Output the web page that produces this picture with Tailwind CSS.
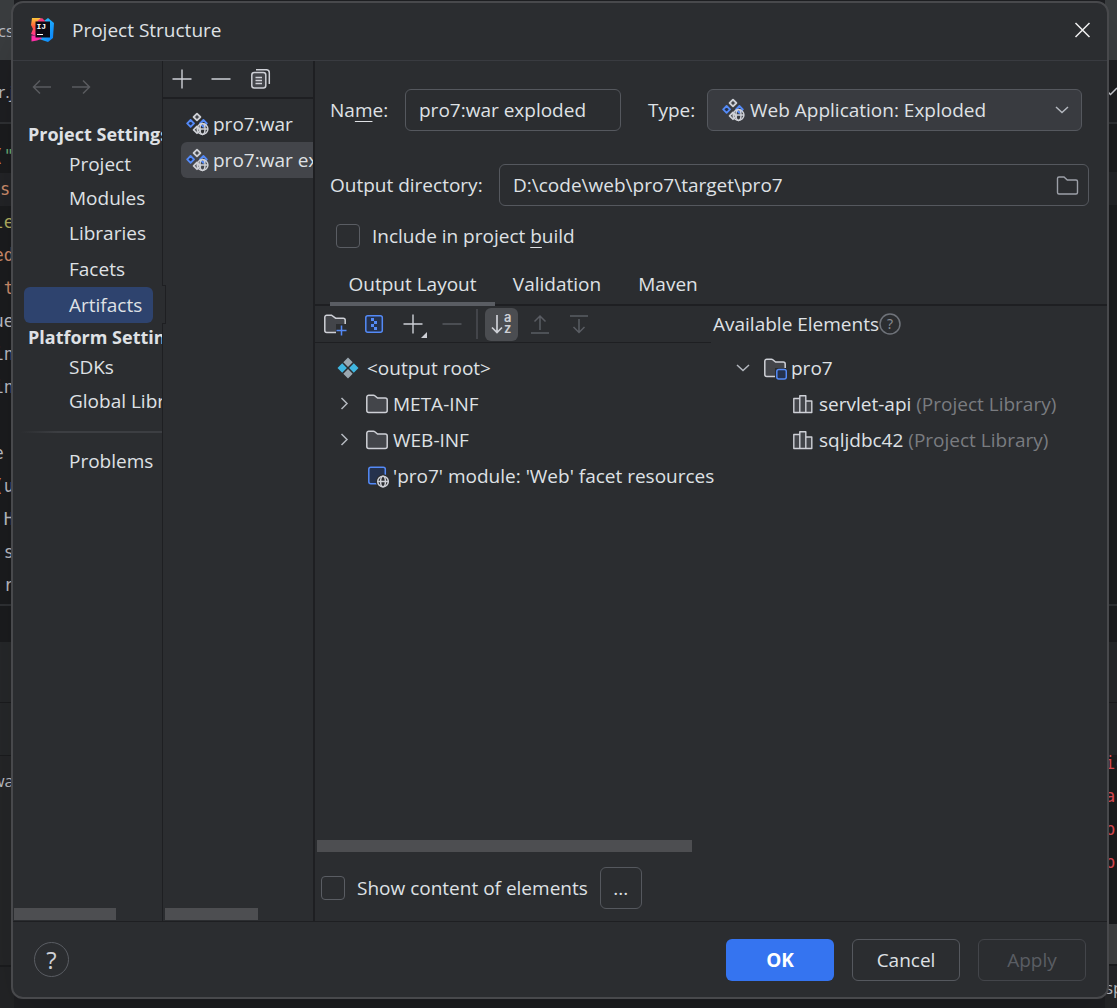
<!DOCTYPE html>
<html lang="en">
<head>
  <meta charset="UTF-8" />
  <meta name="viewport" content="width=device-width, initial-scale=1" />
  <title>Project Structure</title>
  <script src="https://cdn.jsdelivr.net/npm/@tailwindcss/browser@4"></script>
</head>
<body class="bg-[#1e1f22] text-[#dfe1e5] text-[19px] leading-6 font-['Open_Sans','Noto_Sans',sans-serif]">
  <!-- Icon sprite -->
  <svg class="hidden">
    <symbol id="artifact" viewBox="0 0 24 24">
      <mask id="artifact-cut">
        <rect width="24" height="24" fill="#fff" />
        <circle cx="17.5" cy="17" r="7.2" fill="#000" />
      </mask>
      <g mask="url(#artifact-cut)" fill="none" stroke-width="1.8" stroke-linejoin="round">
        <path d="M12 1.6 15.4 5 12 8.4 8.6 5Z" stroke="#ced0d6" fill="#43454a" />
        <path d="M5.6 8 9 11.4 5.6 14.8 2.2 11.4Z" stroke="#548af7" fill="#25324d" />
        <path d="M18.4 8 21.8 11.4 18.4 14.8 15 11.4Z" stroke="#548af7" />
        <path d="M12 14.4 15.4 17.8 12 21.2 8.6 17.8Z" stroke="#ced0d6" />
      </g>
      <g fill="none" stroke="#ced0d6" stroke-width="1.5">
        <circle cx="17.5" cy="17" r="5.4" />
        <ellipse cx="17.5" cy="17" rx="2.5" ry="5.4" />
        <path d="M12 17h11" />
      </g>
    </symbol>
    <symbol id="folder" viewBox="0 0 24 24">
      <path d="M1.8 5.2a2 2 0 0 1 2-2h4.7a2 2 0 0 1 1.3.5l2.8 2.4h7.6a2 2 0 0 1 2 2v10.4a2 2 0 0 1-2 2H3.8a2 2 0 0 1-2-2Z" fill="#43454a" stroke="#ced0d6" stroke-width="1.5" />
    </symbol>
    <symbol id="folder-outline" viewBox="0 0 24 24">
      <path d="M2.5 5.5A1.5 1.5 0 0 1 4 4h5l3.300 3H21a1.500 1.500 0 0 1 1.500 1.500v11A1.500 1.500 0 0 1 21 21H4a1.500 1.500 0 0 1-1.500-1.500Z" fill="none" stroke="#9da0a8" stroke-width="1.4" />
    </symbol>
    <symbol id="library" viewBox="0 0 24 24">
      <path d="M2.8 6.5h6v14h-6ZM8.8 3.8h6v16.7h-6ZM14.8 9h6v11.5h-6Z" fill="#43454a" stroke="#ced0d6" stroke-width="1.4" stroke-linejoin="round" />
    </symbol>
    <symbol id="chevron-right" viewBox="0 0 24 24">
      <path d="m9.5 6 5.5 5.5L9.5 17" fill="none" stroke="#b4b8bf" stroke-width="1.5" />
    </symbol>
    <symbol id="chevron-down" viewBox="0 0 24 24">
      <path d="m6 9 6 5.5L18 9" fill="none" stroke="#b4b8bf" stroke-width="1.5" />
    </symbol>
    <symbol id="plus" viewBox="0 0 24 24">
      <path d="M12 2.5v19M2.5 12h19" fill="none" stroke="currentColor" stroke-width="1.4" />
    </symbol>
    <symbol id="minus" viewBox="0 0 24 24">
      <path d="M2.5 12h19" fill="none" stroke="currentColor" stroke-width="1.4" />
    </symbol>
  </svg>

  <div class="relative min-h-screen overflow-hidden">
    <!-- Editor window behind the dialog -->
    <div class="flex h-screen justify-between text-[#bcbec4] font-['DejaVu_Sans_Mono',monospace] text-[17px] leading-[33px]" aria-hidden="true">
      <div class="flex w-3.5 flex-col overflow-hidden">
        <div class="flex h-[60px] items-center justify-end bg-[#3a3d3f] font-['Open_Sans',sans-serif]">cs</div>
        <div class="flex h-16 items-center justify-end border-b-2 border-[#2f3134] bg-[#1e1f22] font-['Open_Sans',sans-serif]">r.j</div>
        <div class="flex h-[480px] flex-col items-end bg-[#1b1c1e] pt-4">
          <span><span class="text-[#cf8e6d]">(</span><span class="text-[#6aab73]">"</span></span>
          <span class="w-full bg-[#232427] text-[#cf8e6d]">s</span>
          <span class="text-[#b3ae60]">le</span>
          <span class="text-[#cf8e6d]">ed</span>
          <span class="text-[#cf8e6d]">t</span>
          <span>ue</span>
          <span>in</span>
          <span>in</span>
          <span>&nbsp;</span>
          <span>e&nbsp;</span>
          <span><span class="text-[#cf8e6d]">(</span>u</span>
          <span>H</span>
          <span>s</span>
          <span>r</span>
        </div>
        <div class="h-[38px] border-t-2 border-[#2f3134] bg-[#1b1c1e]"></div>
        <div class="h-[60px] bg-[#26282a]"></div>
        <div class="h-[53px] border-t border-[#1b1c1e] bg-[#26282a]"></div>
        <div class="flex h-[210px] items-start justify-end border-t border-[#1b1c1e] bg-[#252628] pt-2 font-['Open_Sans',sans-serif]">wa</div>
        <div class="grow border-t-2 border-[#1b1c1e] bg-[#232426]"></div>
      </div>
      <div class="flex w-3 flex-col overflow-hidden">
        <div class="h-[60px] bg-[#3a3d3f]"></div>
        <div class="flex h-16 items-center border-b-2 border-[#2f3134] bg-[#1e1f22]">
          <svg class="size-3" viewBox="0 0 12 12"><path d="m3 7 2.5 2.5L12 3" fill="none" stroke="#ced0d6" stroke-width="1.5" /></svg>
        </div>
        <div class="h-12 bg-[#1b1c1e]"></div>
        <div class="h-[33px] bg-[#232427]"></div>
        <div class="h-[399px] bg-[#1b1c1e]"></div>
        <div class="h-[38px] border-t-2 border-[#2f3134] bg-[#1b1c1e]"></div>
        <div class="h-[60px] bg-[#26282a]"></div>
        <div class="h-[53px] border-t border-[#1b1c1e] bg-[#26282a]"></div>
        <div class="h-[169px] bg-[#1b1c1e] text-[#e04c55]">
          <div class="-mt-2 flex flex-col">
            <span>ic</span><span>a'</span><span>p'</span><span>p-</span>
          </div>
        </div>
        <div class="h-10 bg-[#3f4042]"></div>
        <div class="flex grow items-center border-t-2 border-[#1b1c1e] bg-[#252628] font-['Open_Sans',sans-serif]">sp</div>
      </div>
    </div>

    <!-- Project Structure dialog -->
    <div role="dialog" aria-labelledby="title" class="absolute top-px right-2 bottom-[9px] left-[11px] flex flex-col overflow-hidden rounded-xl border-2 border-[#48494c] bg-[#2b2d30] whitespace-nowrap shadow-2xl">
      <header class="flex h-[58px] shrink-0 items-center border-b border-[#393b40] pr-3 pb-1 pl-4">
        <svg class="size-7" viewBox="0 0 28 28">
          <defs>
            <linearGradient id="logo-warm" x1="0" y1="0" x2="0" y2="1">
              <stop offset="0" stop-color="#fdc83c" />
              <stop offset=".45" stop-color="#ff5a3c" />
              <stop offset="1" stop-color="#fe2ea6" />
            </linearGradient>
            <linearGradient id="logo-cool" x1="0" y1="0" x2="1" y2="1">
              <stop offset="0" stop-color="#2fd0ff" />
              <stop offset="1" stop-color="#087cfa" />
            </linearGradient>
          </defs>
          <path d="m15 5 4-3 6 5-1 15-5 4-9-3Z" fill="url(#logo-cool)" />
          <path d="M3 2h8l4 3-5 16-8-3 2-5-2-4Z" fill="url(#logo-warm)" />
          <path d="M10 3.5 13 2l4 4H8Z" fill="#f5397d" />
          <path d="M2.500 19.500H10l3 3-5 2-5.500 1Z" fill="#fe2ea6" />
          <path d="M6.500 5.500H21v16H6.500Z" fill="#0b0a14" />
          <text x="7.5" y="13" fill="#fff" font-size="8" font-weight="700" font-family="Liberation Mono">IJ</text>
          <path d="M8 18.500h6" stroke="#fff" stroke-width="1.200" />
        </svg>
        <h1 id="title" class="ml-[15px] grow">Project Structure</h1>
        <button class="grid size-6 place-items-center" aria-label="Close">
          <svg class="size-6" viewBox="0 0 24 24"><path d="m4.500 5 14 14M18.500 5l-14 14" stroke="#f0f0f0" stroke-width="1.500" /></svg>
        </button>
      </header>

      <div class="flex min-h-0 grow">
        <!-- Settings navigation -->
        <nav class="relative flex w-[150px] shrink-0 flex-col border-r border-[#1e1f22]">
          <div class="flex h-[59px] items-center gap-[15px] pb-[7px] pl-[17px] text-[#595b5f]">
            <button class="size-6" aria-label="Back"><svg viewBox="0 0 24 24" fill="none" stroke="currentColor" stroke-width="1.5"><path d="M21 12H3.5M10 5.5 3.5 12l6.5 6.5" /></svg></button>
            <button class="size-6" aria-label="Forward"><svg viewBox="0 0 24 24" fill="none" stroke="currentColor" stroke-width="1.5"><path d="M3 12h17.5M14 5.5l6.5 6.5-6.5 6.5" /></svg></button>
          </div>
          <div class="grow overflow-hidden">
            <h2 class="flex h-7 items-center pl-[15px] text-lg leading-6 font-bold">Project Settings</h2>
            <a href="#" class="flex h-8 items-center pl-14">Project</a>
            <a href="#" class="flex h-[35px] items-center pl-14">Modules</a>
            <a href="#" class="flex h-9 items-center pl-14">Libraries</a>
            <a href="#" class="flex h-9 items-center pl-14">Facets</a>
            <a href="#" class="mr-[9px] ml-[11px] flex h-9 items-center rounded-md bg-[#2e436e] pl-[45px]">Artifacts</a>
            <h2 class="flex h-7 items-center pl-[15px] text-lg leading-6 font-bold">Platform Settings</h2>
            <a href="#" class="flex h-8 items-center pl-14">SDKs</a>
            <a href="#" class="flex h-[35px] items-center pl-14">Global Libraries</a>
            <div class="mt-[13px] mb-2.5 h-0.5 bg-linear-to-r from-transparent from-5% to-[#3c3e42] to-30%"></div>
            <a href="#" class="flex h-9 items-center pl-14">Problems</a>
          </div>
          <div class="mb-px ml-px h-3 w-[102px] bg-[#4d4e51]"></div>
          <!-- Notch in the divider beside the selected item -->
          <div class="absolute top-[224px] -right-1 h-[39px] w-1 border-y border-r border-[#1e1f22] bg-[#2b2d30]"></div>
        </nav>

        <!-- Artifact list -->
        <section class="flex w-[152px] shrink-0 flex-col border-r-2 border-[#1e1f22]">
          <div class="flex h-[38px] shrink-0 items-center gap-[15px] border-b-2 border-[#1e1f22] pl-[7px] text-[#ced0d6]">
            <button class="size-6" aria-label="Add"><svg class="size-6"><use href="#plus" /></svg></button>
            <button class="size-6" aria-label="Remove"><svg class="size-6"><use href="#minus" /></svg></button>
            <button class="size-6" aria-label="Copy">
              <svg viewBox="0 0 24 24" fill="none" stroke="currentColor" stroke-width="1.5">
                <rect x="3.8" y="5.5" width="14" height="15.5" rx="2.5" fill="#43454a" />
                <path d="M8 2.8h10.3a3 3 0 0 1 3 3V17M7.5 10.5H14M7.5 13.5H14M7.5 16.5H14" />
              </svg>
            </button>
          </div>
          <ul class="grow overflow-hidden pt-[7px]">
            <li class="ml-[18px] flex h-9 items-center gap-1 pl-1"><svg class="size-6 shrink-0"><use href="#artifact" /></svg>pro7:war</li>
            <li class="ml-[18px] flex h-9 items-center gap-1 rounded-l-md bg-[#43454a] pl-1"><svg class="size-6 shrink-0"><use href="#artifact" /></svg>pro7:war exploded</li>
          </ul>
          <div class="mb-px ml-0.5 h-3 w-[93px] bg-[#4d4e51]"></div>
        </section>

        <!-- Artifact editor -->
        <main class="flex min-w-0 grow flex-col">
          <div class="flex items-center pt-7 pr-[25px] pl-[15px]">
            <label for="name" class="w-[75px] shrink-0">Na<u class="underline-offset-4">m</u>e:</label>
            <input id="name" type="text" value="pro7:war exploded" class="h-[42px] w-[216px] rounded-md border border-[#55585e] bg-transparent px-[13px]" />
            <label for="type" class="w-[86px] shrink-0 pl-[27px]">Type:</label>
            <div class="relative grow">
              <select id="type" class="block h-[42px] w-full appearance-none rounded-md border border-[#55585e] bg-[#393b40] pl-[42px]">
                <option>Web Application: Exploded</option>
              </select>
              <svg class="pointer-events-none absolute top-[9px] left-[14px] size-6"><use href="#artifact" /></svg>
              <svg class="pointer-events-none absolute top-[9px] right-2 size-6"><use href="#chevron-down" /></svg>
            </div>
          </div>
          <div class="flex items-center pt-[33px] pr-[18px] pl-[15px]">
            <label for="output" class="w-[169px] shrink-0">Output directory:</label>
            <div class="relative grow">
              <input id="output" type="text" value="D:\code\web\pro7\target\pro7" class="block h-[42px] w-full rounded-md border border-[#55585e] bg-transparent pr-10 pl-[13px]" />
              <button class="absolute top-[9px] right-[10px] size-6" aria-label="Browse"><svg class="size-6"><use href="#folder-outline" /></svg></button>
            </div>
          </div>
          <div class="flex items-center gap-3 pt-[18px] pl-[21px]">
            <input id="include" type="checkbox" class="size-6 appearance-none rounded border border-[#5a5d63]" />
            <label for="include">Include in project <u class="underline-offset-4">b</u>uild</label>
          </div>

          <div role="tablist" class="mt-3.5 flex h-11 shrink-0 items-stretch border-b-2 border-[#1e1f22] pt-px pl-[15px]">
            <button role="tab" aria-selected="true" class="-mb-0.5 w-[165px] border-b-4 border-[#5a5d63] pt-0.5">Output Layout</button>
            <button role="tab" class="w-[124px]">Validation</button>
            <button role="tab" class="w-[98px]">Maven</button>
          </div>

          <div class="flex min-h-0 grow">
            <!-- Output tree -->
            <div class="flex w-1/2 flex-col">
              <div class="flex h-[37px] shrink-0 items-center gap-[15px] border-b border-[#1e1f22] pl-2 text-[#ced0d6]">
                <button class="size-6" aria-label="New folder">
                  <svg viewBox="0 0 24 24" fill="none" stroke-width="1.5">
                    <path d="M13 20.5H3.8a2 2 0 0 1-2-2V5.2a2 2 0 0 1 2-2h4.7l4.100 3h7.600a2 2 0 0 1 2 2v4" fill="#43454a" stroke="currentColor" />
                    <path d="M13 12h11v12H13Z" fill="#2b2d30" />
                    <path d="M18.5 13.5v10M13.5 18.5h10" stroke="#548af7" />
                  </svg>
                </button>
                <button class="size-6" aria-label="New archive">
                  <svg viewBox="0 0 24 24"><rect x="3.8" y="3.8" width="16.5" height="16.5" rx="2" fill="#25324d" stroke="#548af7" stroke-width="1.5" /><path d="M9 6h3v3H9ZM12 9h3v3h-3ZM9 12h3v3H9ZM12 15h3v3h-3Z" fill="#548af7" /></svg>
                </button>
                <button class="relative size-6" aria-label="Add copy of"><svg class="size-6"><use href="#plus" /></svg>
                  <svg class="absolute -right-0.5 -bottom-0.5 size-1.5" viewBox="0 0 6 6"><path d="M6 0v6H0Z" fill="#ced0d6" /></svg>
                </button>
                <button class="size-6 text-[#5a5d63]" aria-label="Remove"><svg class="size-6"><use href="#minus" /></svg></button>
                <div class="-ml-[3px] h-[30px] w-0.5 bg-[#43454a]"></div>
                <button class="-mx-2 grid size-[33px] place-items-center rounded-md bg-[#4b4d51]" aria-label="Sort">
                  <svg class="size-6" viewBox="0 0 24 24" fill="none" stroke="#ced0d6" stroke-width="1.7">
                    <path d="M7 3v17M2 15.5l5 5 5-5" />
                    <text x="14" y="10" fill="#ced0d6" stroke="none" font-size="13" font-weight="600" font-family="Inter">a</text>
                    <text x="14" y="21" fill="#ced0d6" stroke="none" font-size="13" font-weight="600" font-family="Inter">z</text>
                  </svg>
                </button>
                <button class="ml-[3px] size-6 text-[#5a5d63]" aria-label="Move up"><svg viewBox="0 0 24 24" fill="none" stroke="currentColor" stroke-width="1.5"><path d="M12 18V4.5M6.5 9.5 12 4l5.5 5.5M3 21h18" /></svg></button>
                <button class="size-6 text-[#5a5d63]" aria-label="Move down"><svg viewBox="0 0 24 24" fill="none" stroke="currentColor" stroke-width="1.5"><path d="M12 7v13.5M6.5 15l5.5 5.5 5.5-5.5M3 4h18" /></svg></button>
              </div>
              <ul class="grow pt-[7px]">
                <li class="flex h-9 items-center gap-[7px] pl-[21px]">
                  <svg class="size-6" viewBox="0 0 24 24"><path d="m12 1.5 4.7 4.7-4.7 4.7-4.7-4.7ZM12 13l4.7 4.7-4.7 4.7-4.7-4.7Z" fill="#9aa7b0" /><path d="M6.2 7.3 10.9 12l-4.7 4.7L1.5 12ZM17.8 7.3l4.7 4.7-4.7 4.7-4.7-4.7Z" fill="#40b6e0" /></svg>
                  &lt;output root&gt;
                </li>
                <li class="flex h-9 items-center pl-[17px]"><svg class="size-6"><use href="#chevron-right" /></svg><svg class="mr-1 ml-[9px] size-6"><use href="#folder" /></svg>META-INF</li>
                <li class="flex h-9 items-center pl-[17px]"><svg class="size-6"><use href="#chevron-right" /></svg><svg class="mr-1 ml-[9px] size-6"><use href="#folder" /></svg>WEB-INF</li>
                <li class="flex h-9 items-center gap-1 pl-[50px]">
                  <svg class="size-6 shrink-0" viewBox="0 0 24 24">
                    <rect x="3.8" y="3.2" width="16.5" height="16.5" rx="2" fill="#25324d" stroke="#548af7" stroke-width="1.5" />
                    <circle cx="18" cy="17.5" r="7.2" fill="#2b2d30" />
                    <g fill="none" stroke="#ced0d6" stroke-width="1.5"><circle cx="18" cy="17.5" r="5.3" /><ellipse cx="18" cy="17.5" rx="2.4" ry="5.3" /><path d="M12.7 17.5h10.6" /></g>
                  </svg>
                  'pro7' module: 'Web' facet resources
                </li>
              </ul>
              <div class="ml-0.5 h-3 w-[375px] bg-[#4d4e51]"></div>
            </div>

            <!-- Available elements tree -->
            <div class="w-1/2 pl-0.5">
              <div class="flex h-9 items-center">
                Available Elements
                <svg class="size-[22px]" viewBox="0 0 22 22"><circle cx="11" cy="11" r="10" fill="none" stroke="#6f737a" stroke-width="1.5" /><text x="11" y="16" text-anchor="middle" fill="#868a91" font-size="14" font-family="Noto Sans">?</text></svg>
              </div>
              <ul class="pt-2">
                <li class="flex h-9 items-center pl-[18px]"><svg class="size-6"><use href="#chevron-down" /></svg>
                  <svg class="mr-1 ml-2 size-6" viewBox="0 0 24 24">
                    <use href="#folder" width="24" height="24" />
                    <path d="M12 12h12v12H12Z" fill="#2b2d30" />
                    <rect x="13.8" y="13.5" width="9.5" height="9.5" rx="2" fill="#25324d" stroke="#548af7" stroke-width="1.5" />
                  </svg>pro7</li>
                <li class="flex h-9 items-center gap-1 pl-[78px]"><svg class="size-6"><use href="#library" /></svg><span>servlet-api <span class="text-[#7a7c80]">(Project Library)</span></span></li>
                <li class="flex h-9 items-center gap-1 pl-[78px]"><svg class="size-6"><use href="#library" /></svg><span>sqljdbc42 <span class="text-[#7a7c80]">(Project Library)</span></span></li>
              </ul>
            </div>
          </div>

          <div class="flex items-center gap-3 pt-[15px] pb-3 pl-1.5">
            <input id="show" type="checkbox" class="size-6 appearance-none rounded border border-[#5a5d63]" />
            <label for="show">Show content of elements</label>
            <button class="h-[42px] w-[42px] rounded-md border border-[#55585e]">...</button>
          </div>
        </main>
      </div>

      <footer class="flex h-[76px] shrink-0 items-center gap-[18px] border-t border-[#1e1f22] px-[21px]">
        <button class="mr-auto grid size-[35px] place-items-center rounded-full border border-[#5a5d63] text-2xl leading-none text-[#ced0d6]">?</button>
        <button class="h-[42px] w-[108px] rounded-md bg-[#3574f0] font-bold text-white">OK</button>
        <button class="h-[42px] w-[108px] rounded-md border border-[#55585e]">Cancel</button>
        <button disabled class="h-[42px] w-[108px] rounded-md border border-[#43454a] text-[#5a5d63]">Apply</button>
      </footer>
    </div>
  </div>
</body>
</html>
